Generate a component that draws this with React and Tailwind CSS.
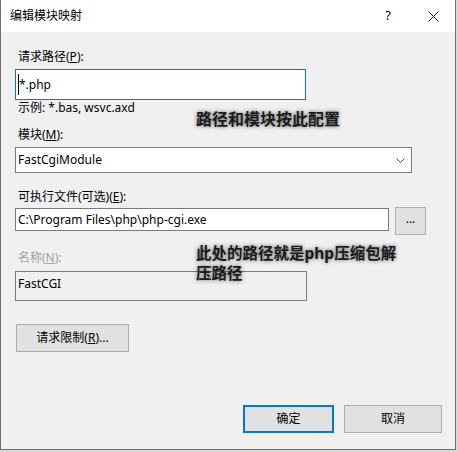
import React from 'react';

const font = { fontFamily: '"Noto Sans", "Noto Sans CJK SC", sans-serif' };

const Label = ({ children, disabled }) => (
  <div className={`pl-[3px] h-[16px] leading-[16px] text-[12px] ${disabled ? 'text-[#a0a0a0]' : 'text-black'}`}>
    {children}
  </div>
);

const App = () => {
  return (
    <div className="w-[457px] h-[452px] bg-[#d9d9d9] relative overflow-hidden" style={font}>
      <div className="w-[456px] h-[450px] flex flex-col border-x border-b border-[#6e6e6e] bg-[#f0f0f0] relative">
        {/* title bar */}
        <div className="h-[32px] bg-white flex items-center shrink-0">
          <span className="ml-[9px] text-[12px] text-black">编辑模块映射</span>
          <span className="ml-auto text-[13px] text-black mr-[37px]">?</span>
          <svg width="11" height="11" viewBox="0 0 11 11" className="mr-[16px]">
            <path d="M0.5 0.5 L10.5 10.5 M10.5 0.5 L0.5 10.5" stroke="#111" strokeWidth="1" />
          </svg>
        </div>

        {/* body */}
        <div className="flex flex-col pl-[14px] pr-[13px]">
          <div className="mt-[17px]">
            <Label>请求路径(<u>P</u>):</Label>
          </div>
          <div className="mt-[4px] w-[291px] h-[31px] bg-white border border-[#0078d7] flex items-center pl-[2px] text-[12px] text-black">
            <span className="w-[1px] h-[21px] bg-black"></span>
            <span>*.php</span>
          </div>
          <Label>示例: *.bas, wsvc.axd</Label>

          <div className="mt-[11px]">
            <Label>模块(<u>M</u>):</Label>
          </div>
          <div className="mt-[4px] w-[397px] h-[26px] bg-white border border-[#7a7a7a] flex items-center pl-[2px] pr-[6px] text-[12px] text-black">
            <span>FastCgiModule</span>
            <svg width="9" height="5" viewBox="0 0 9 5" className="ml-auto">
              <path d="M0.5 0.5 L4.5 4.5 L8.5 0.5" fill="none" stroke="#555" strokeWidth="1" />
            </svg>
          </div>

          <div className="mt-[16px]">
            <Label>可执行文件(可选)(<u>E</u>):</Label>
          </div>
          <div className="mt-[2px] flex items-start gap-[6px]">
            <div className="mt-[1px] w-[374px] h-[23px] bg-white border border-[#7a7a7a] flex items-center pl-[2px] text-[12px] text-black">
              C:\Program Files\php\php-cgi.exe
            </div>
            <div className="w-[31px] h-[28px] bg-[#e1e1e1] border border-[#adadad] flex items-center justify-center text-[12px] text-black leading-none pb-[4px]">
              ...
            </div>
          </div>

          <div className="mt-[15px]">
            <Label disabled>名称(<u>N</u>):</Label>
          </div>
          <div className="mt-[5px] w-[292px] h-[30px] border border-[#7a7a7a] flex items-start pl-[2px] pt-[3px] text-[12px] text-black">
            FastCGI
          </div>

          <div className="mt-[23px] ml-[1px] w-[113px] h-[28px] bg-[#e1e1e1] border border-[#adadad] flex items-center justify-center text-[12px] text-black">
            请求限制(<u>R</u>)...
          </div>

          <div className="mt-[53px] flex justify-end gap-[10px]">
            <div className="w-[91px] h-[28px] bg-[#e1e1e1] border-2 border-[#0078d7] flex items-center justify-center text-[12px] text-black">
              确定
            </div>
            <div className="w-[98px] h-[28px] bg-[#e1e1e1] border border-[#adadad] flex items-center justify-center text-[12px] text-black">
              取消
            </div>
          </div>
        </div>

        {/* annotations drawn over the dialog */}
        <div className="absolute left-[195px] top-[109px] text-[16px] font-bold text-[#1a1a1a] leading-[20px] [text-shadow:0_0_4px_rgba(0,0,0,0.6)]">
          路径和模块按此配置
        </div>
        <div className="absolute left-[195px] top-[243px] w-[230px] text-[15.5px] font-bold text-[#1a1a1a] leading-[20px] [text-shadow:0_0_4px_rgba(0,0,0,0.6)]">
          此处的路径就是php压缩包解<br />压路径
        </div>
      </div>
    </div>
  );
};

export default App;
